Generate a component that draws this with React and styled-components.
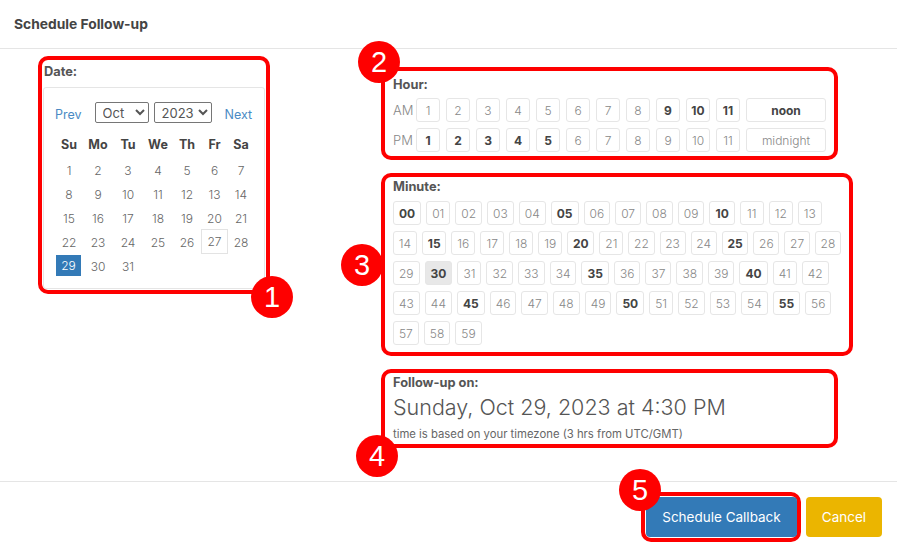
import React from "react";
import styled, { createGlobalStyle } from "styled-components";

const GlobalStyle = createGlobalStyle`
  html, body {
    margin: 0;
    padding: 0;
    background: #fff;
    font-family: "Inter", "Open Sans", sans-serif;
    color: #555;
  }
  * { box-sizing: border-box; }
`;

const Page = styled.div`
  width: 897px;
  height: 551px;
  display: flex;
  flex-direction: column;
  background: #fff;
  overflow: hidden;
`;

const Header = styled.div`
  height: 49px;
  padding: 0 14px;
  display: flex;
  align-items: center;
  border-bottom: 1px solid #e5e5e5;
  font-size: 13.8px;
  font-weight: 700;
  color: #444;
`;

const Body = styled.div`
  height: 432px;
  display: flex;
  align-items: flex-start;
  padding: 7px 0 0 38px;
  gap: 111px;
`;

const RightColumn = styled.div`
  display: flex;
  flex-direction: column;
  align-items: flex-start;
  gap: 13px;
  margin-top: 11px;
`;

const Callout = styled.div`
  position: relative;
  border: 4px solid #fe0000;
  border-radius: 10px;
  width: ${(p) => p.$width || "auto"};
  padding: ${(p) => p.$pad || "0"};
`;

const Badge = styled.span`
  position: absolute;
  z-index: 2;
  width: 42px;
  height: 42px;
  border-radius: 50%;
  background: #fe0000;
  color: #fff;
  font-family: "Liberation Sans", Arial, sans-serif;
  font-size: 29px;
  line-height: 42px;
  text-align: center;
  top: ${(p) => p.$top || "auto"};
  left: ${(p) => p.$left || "auto"};
  right: ${(p) => p.$right || "auto"};
  bottom: ${(p) => p.$bottom || "auto"};
`;

const Label = styled.div`
  font-size: 12.8px;
  font-weight: 700;
  color: #555;
  line-height: ${(p) => p.$lh || "18px"};
  margin-bottom: ${(p) => p.$mb || "0"};
  padding-left: ${(p) => p.$pl || "0"};
`;

/* calendar */
const Calendar = styled.div`
  border: 1px solid #e5e5e5;
  border-radius: 3px;
  padding: 14px 11px 10px;
  width: 222px;
`;

const NavRow = styled.div`
  display: flex;
  align-items: center;
  height: 21px;
  margin-bottom: 11px;
`;

const NavLink = styled.a`
  font-size: 12.5px;
  color: #4a8ac4;
  text-decoration: none;
  margin-top: 4px;
  margin-right: ${(p) => p.$mr || "0"};
  margin-left: ${(p) => p.$ml || "0"};
`;

const Select = styled.select`
  height: 21px;
  width: ${(p) => p.$w};
  margin-right: ${(p) => p.$mr || "0"};
  font-family: "Inter", sans-serif;
  font-size: 13px;
  color: #555;
  border: 1px solid #767676;
  border-radius: 2px;
  background: #fff;
  padding: 0 0 0 3px;
`;

const DayGrid = styled.div`
  display: grid;
  grid-template-columns: 28px 30px 30px 30px 28px 27px 26px;
  grid-auto-rows: 24px;
  width: 199px;
`;

const DayHead = styled.div`
  grid-row: 1;
  display: flex;
  align-items: center;
  justify-content: center;
  font-size: 12.5px;
  font-weight: 700;
  color: #444;
  height: 20px;
  margin-bottom: 4px;
`;

const Day = styled.div`
  display: flex;
  align-items: center;
  justify-content: center;
  font-size: 12px;
  font-weight: 300;
  color: ${(p) => (p.$selected ? "#fff" : "#666")};
  background: ${(p) => (p.$selected ? "#337ab7" : "transparent")};
  border: 1px solid ${(p) => (p.$today ? "#e3e3e3" : "transparent")};
  margin: ${(p) => (p.$selected ? "1px 2px 2px 1px" : "0")};
  ${(p) => (p.$today ? "margin-top: -1px; height: 25px;" : "")}
`;

/* hours & minutes */
const CellRow = styled.div`
  display: flex;
  align-items: center;
  gap: ${(p) => p.$gap || "6px"};
  margin-top: ${(p) => p.$mt || "0"};
`;

const RowLabel = styled.span`
  width: 25px;
  font-size: 13px;
  font-weight: 300;
  color: #888;
  margin-right: -6px;
`;

const Cell = styled.div`
  height: 24px;
  min-width: ${(p) => p.$w || "24px"};
  padding: 0 ${(p) => p.$px || "0"};
  display: flex;
  align-items: center;
  justify-content: center;
  border: 1px solid #e6e6e6;
  border-radius: 3px;
  font-size: 12px;
  font-weight: ${(p) => (p.$bold ? 700 : 300)};
  color: ${(p) => (p.$bold ? "#444" : "#888")};
  background: ${(p) => (p.$selected ? "#e8e8e8" : "#fff")};
`;

const BigDate = styled.div`
  font-size: 21.5px;
  font-weight: 300;
  color: #555;
  line-height: 28px;
  margin-top: 2px;
`;

const Note = styled.div`
  font-size: 11.3px;
  color: #666;
  line-height: 16px;
  margin-top: 5px;
`;

const Footer = styled.div`
  flex: 1;
  border-top: 1px solid #e5e5e5;
  display: flex;
  justify-content: flex-end;
  align-items: flex-start;
  gap: 5px;
  padding: 10px 15px 0 0;
`;

const Button = styled.button`
  height: 40px;
  width: ${(p) => p.$w};
  border: none;
  border-radius: 4px;
  background: ${(p) => p.$bg};
  color: #fff;
  font-family: "Inter", sans-serif;
  font-size: 13.5px;
  cursor: pointer;
  margin-top: ${(p) => p.$mt || "0"};
`;

const days = ["Su", "Mo", "Tu", "We", "Th", "Fr", "Sa"];
const minuteRows = [14, 15, 14, 14, 3];

function buildMinuteRows() {
  const rows = [];
  let n = 0;
  minuteRows.forEach((count) => {
    const row = [];
    for (let i = 0; i < count; i++) {
      row.push(n);
      n++;
    }
    rows.push(row);
  });
  return rows;
}

const App = () => {
  const amBold = [9, 10, 11];
  const pmBold = [1, 2, 3, 4, 5];
  const hours = [1, 2, 3, 4, 5, 6, 7, 8, 9, 10, 11];

  return (
    <Page>
      <GlobalStyle />
      <Header>Schedule Follow-up</Header>
      <Body>
        <Callout $width="232px" $pad="3px 1px 1px 1px">
          <Label $lh="18px" $mb="6px" $pl="1px">Date:</Label>
          <Calendar>
            <NavRow>
              <NavLink href="#" $mr="13px">Prev</NavLink>
              <Select $w="54px" $mr="5px" defaultValue="Oct">
                <option>Oct</option>
              </Select>
              <Select $w="58px" defaultValue="2023">
                <option>2023</option>
              </Select>
              <NavLink href="#" $ml="13px">Next</NavLink>
            </NavRow>
            <DayGrid>
              {days.map((d) => (
                <DayHead key={d}>{d}</DayHead>
              ))}
              {Array.from({ length: 31 }, (_, i) => i + 1).map((d) => (
                <Day key={d} $selected={d === 29} $today={d === 27}>
                  {d}
                </Day>
              ))}
            </DayGrid>
          </Calendar>
          <Badge $right="-27px" $bottom="-28px">1</Badge>
        </Callout>

        <RightColumn>
          <Callout $width="457px" $pad="5px 8px 4px">
            <Label $mb="4px">Hour:</Label>
            <CellRow>
              <RowLabel>AM</RowLabel>
              {hours.map((h) => (
                <Cell key={h} $bold={amBold.includes(h)}>{h}</Cell>
              ))}
              <Cell $w="80px" $bold>noon</Cell>
            </CellRow>
            <CellRow $mt="6px">
              <RowLabel>PM</RowLabel>
              {hours.map((h) => (
                <Cell key={h} $bold={pmBold.includes(h)}>{h}</Cell>
              ))}
              <Cell $w="80px">midnight</Cell>
            </CellRow>
            <Badge $left="-27px" $top="-30px">2</Badge>
          </Callout>

          <Callout $width="472px" $pad="1px 8px 7px">
            <Label $mb="5px">Minute:</Label>
            {buildMinuteRows().map((row, ri) => (
              <CellRow key={ri} $gap="5px" $mt={ri ? "6px" : "0"}>
                {row.map((m) => (
                  <Cell
                    key={m}
                    $px="5px"
                    $bold={m % 5 === 0}
                    $selected={m === 30}
                  >
                    {String(m).padStart(2, "0")}
                  </Cell>
                ))}
              </CellRow>
            ))}
            <Badge $left="-44px" $top="calc(50% - 21px)">3</Badge>
          </Callout>

          <Callout $width="457px" $pad="2px 8px 2px">
            <Label $lh="16px">Follow-up on:</Label>
            <BigDate>Sunday, Oct 29, 2023 at 4:30 PM</BigDate>
            <Note>time is based on your timezone (3 hrs from UTC/GMT)</Note>
            <Badge $left="-29px" $bottom="-33px">4</Badge>
          </Callout>
        </RightColumn>
      </Body>
      <Footer>
        <Callout $pad="1px 0 1px 1px">
          <Button $w="151px" $bg="#337ab7">Schedule Callback</Button>
          <Badge $left="-26px" $top="-27px">5</Badge>
        </Callout>
        <Button $w="76px" $bg="#ebb500" $mt="5px">Cancel</Button>
      </Footer>
    </Page>
  );
};

export default App;
